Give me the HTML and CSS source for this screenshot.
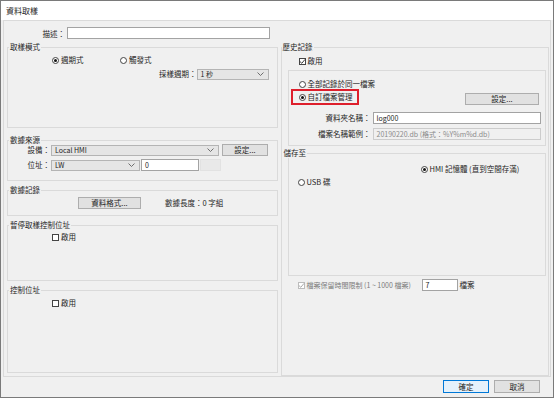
FILE: index.html
```html
<!DOCTYPE html>
<html lang="zh-Hant">
<head>
    <meta charset="UTF-8" />
    <title>資料取樣</title>
    <link rel="stylesheet" href="styles.css">
</head>
<body>
    <div class="window">
        <div class="titlebar">資料取樣</div>
        <div class="content">
            <div class="panel">
                <!-- description -->
                <div class="desc-row">
                    <span class="desc-label">描述：</span>
                    <span class="textbox desc-input"></span>
                </div>

                <div class="columns">
                    <div class="col-left">
                        <fieldset class="group g-mode">
                            <legend>取樣模式</legend>
                            <div class="row mode-radios">
                                <span class="opt opt-period"><span class="radio checked"></span>週期式</span>
                                <span class="opt"><span class="radio"></span>觸發式</span>
                            </div>
                            <div class="row period-row">
                                <span>採樣週期：</span>
                                <span class="combo period-combo">1 秒
                                    <svg width="7" height="4" viewBox="0 0 7 4"><path d="M0.5 0.5 L3.5 3.5 L6.5 0.5" fill="none" stroke="#606060" stroke-width="0.9"/></svg>
                                </span>
                            </div>
                        </fieldset>

                        <fieldset class="group g-source">
                            <legend>數據來源</legend>
                            <div class="row src-row">
                                <span class="field-label">設備：</span>
                                <span class="combo device-combo">Local HMI
                                    <svg width="7" height="4" viewBox="0 0 7 4"><path d="M0.5 0.5 L3.5 3.5 L6.5 0.5" fill="none" stroke="#606060" stroke-width="0.9"/></svg>
                                </span>
                                <span class="button device-btn">設定...</span>
                            </div>
                            <div class="row src-row second">
                                <span class="field-label">位址：</span>
                                <span class="combo addr-combo">LW
                                    <svg width="7" height="4" viewBox="0 0 7 4"><path d="M0.5 0.5 L3.5 3.5 L6.5 0.5" fill="none" stroke="#606060" stroke-width="0.9"/></svg>
                                </span>
                                <span class="textbox addr-input">0</span>
                                <span class="graybox"></span>
                            </div>
                        </fieldset>

                        <fieldset class="group g-record">
                            <legend>數據記錄</legend>
                            <div class="row record-row">
                                <span class="button format-btn">資料格式...</span>
                                <span class="record-len">數據長度：0 字組</span>
                            </div>
                        </fieldset>

                        <fieldset class="group g-pause">
                            <legend>暫停取樣控制位址</legend>
                            <div class="row check-row">
                                <span class="checkbox"></span>啟用
                            </div>
                        </fieldset>

                        <fieldset class="group g-control">
                            <legend>控制位址</legend>
                            <div class="row check-row">
                                <span class="checkbox"></span>啟用
                            </div>
                        </fieldset>
                    </div>

                    <fieldset class="group g-history">
                        <legend>歷史記錄</legend>
                        <div class="row history-enable">
                            <span class="checkbox">
                                <svg width="7" height="7" viewBox="0 0 7 7"><path d="M1 3.6 L2.8 5.3 L6 1.4" fill="none" stroke="#222" stroke-width="0.9"/></svg>
                            </span>啟用
                        </div>

                        <div class="subbox files-box">
                            <div class="row file-opt">
                                <span class="radio"></span>全部記錄於同一檔案
                            </div>
                            <div class="row custom-row">
                                <span class="highlight"><span class="radio checked"></span>自訂檔案管理</span>
                                <span class="button custom-btn">設定...</span>
                            </div>
                            <div class="row name-row">
                                <span class="name-label">資料夾名稱：</span>
                                <span class="textbox name-input">log000</span>
                            </div>
                            <div class="row name-row sample">
                                <span class="name-label">檔案名稱範例：</span>
                                <span class="textbox name-input disabled">20190220.db (格式：%Y%m%d.db)</span>
                            </div>
                        </div>

                        <fieldset class="group g-store">
                            <legend>儲存至</legend>
                            <div class="row store-hmi">
                                <span class="radio checked"></span>HMI 記憶體 (直到空間存滿)
                            </div>
                            <div class="row store-usb">
                                <span class="radio"></span>USB 碟
                            </div>
                        </fieldset>

                        <div class="row keep-row">
                            <span class="checkbox disabled">
                                <svg width="7" height="7" viewBox="0 0 7 7"><path d="M1 3.6 L2.8 5.3 L6 1.4" fill="none" stroke="#a0a0a0" stroke-width="0.9"/></svg>
                            </span>
                            <span class="keep-label">檔案保留時間限制 (1 ~ 1000 檔案)</span>
                            <span class="textbox keep-input">7</span>
                            <span class="keep-unit">檔案</span>
                        </div>
                    </fieldset>
                </div>
            </div>

            <div class="footer">
                <span class="button default-btn">確定</span>
                <span class="button">取消</span>
            </div>
        </div>
    </div>
</body>
</html>
```

FILE: styles.css
```css
* {
    box-sizing: border-box;
}
body {
    margin: 0;
    background: #ffffff;
    font-family: "Noto Sans CJK TC", "Noto Sans", sans-serif;
    font-size: 7.5px;
    color: #1e1e1e;
}
.window {
    width: 554px;
    height: 398px;
    border: 1px solid #7a7a7a;
    background: #f0f0f0;
    display: flex;
    flex-direction: column;
}
.titlebar {
    height: 19px;
    line-height: 19px;
    background: #ffffff;
    padding-left: 5px;
    font-size: 8px;
}
.content {
    flex: 1;
    padding: 0 2px;
    display: flex;
    flex-direction: column;
}
.panel {
    height: 357px;
    border: 1px solid #dadada;
    padding: 0 1px 0 3px;
}
.row {
    display: flex;
    align-items: center;
    height: 12px;
    line-height: 12px;
    white-space: nowrap;
}

/* controls */
.textbox {
    display: block;
    height: 12px;
    line-height: 10px;
    background: #ffffff;
    border: 1px solid #a3a3a3;
    padding-left: 3px;
    font-size: 7px;
}
.textbox.disabled {
    background: #f0f0f0;
    border-color: #cccccc;
    color: #8a8a8a;
}
.combo {
    display: flex;
    align-items: center;
    justify-content: space-between;
    height: 11px;
    line-height: 9px;
    background: #e5e5e5;
    border: 1px solid #b4b4b4;
    padding: 0 4px 0 3px;
    font-size: 7px;
}
.button {
    display: block;
    height: 12px;
    line-height: 10px;
    background: #e1e1e1;
    border: 1px solid #adadad;
    text-align: center;
}
.graybox {
    width: 21px;
    height: 12px;
    margin-left: 1px;
    background: #e9e9e9;
    border: 1px solid #e2e2e2;
}
.radio {
    width: 7px;
    height: 7px;
    border: 1px solid #444444;
    border-radius: 50%;
    background: #ffffff;
    margin-right: 2px;
    display: flex;
    align-items: center;
    justify-content: center;
    flex: none;
}
.radio.checked::after {
    content: "";
    width: 3px;
    height: 3px;
    border-radius: 50%;
    background: #111111;
}
.checkbox {
    width: 7px;
    height: 7px;
    border: 1px solid #444444;
    background: #ffffff;
    margin-right: 2px;
    display: flex;
    flex: none;
}
.checkbox svg {
    margin: -1px;
}
.checkbox.disabled {
    border-color: #bcbcbc;
}

/* layout */
.desc-row {
    display: flex;
    align-items: center;
    height: 12px;
    margin: 6px 0 3px;
}
.desc-label {
    width: 58px;
    text-align: right;
}
.desc-input {
    width: 203px;
    margin-left: 2px;
}
.columns {
    display: flex;
    gap: 3px;
}
.col-left {
    width: 271px;
    display: flex;
    flex-direction: column;
}
.group {
    margin: 0;
    padding: 0;
    min-width: 0;
    border: 1px solid #dadada;
}
.group legend {
    margin-left: 1px;
    padding: 0 1px;
    line-height: 10px;
    height: 10px;
}
.g-mode { height: 86px; margin-bottom: 7px; }
.g-source { height: 46px; margin-bottom: 4px; }
.g-record { height: 31px; margin-bottom: 4px; }
.g-pause { height: 61px; margin-bottom: 4px; }
.g-control { height: 88px; }

.mode-radios {
    margin-top: 2px;
    padding-left: 44px;
}
.opt {
    display: flex;
    align-items: center;
}
.opt-period {
    width: 68px;
}
.period-row {
    margin-top: 2px;
    justify-content: flex-end;
    padding-right: 8px;
}
.period-combo {
    width: 72px;
}

.src-row {
    margin-top: -1px;
}
.src-row .field-label {
    width: 42px;
    text-align: right;
}
.src-row.second {
    margin-top: 3px;
}
.device-combo {
    width: 168px;
    margin-left: 1px;
}
.device-btn {
    width: 46px;
    margin-left: 3px;
}
.addr-combo {
    width: 89px;
    margin-left: 1px;
}
.addr-input {
    width: 58px;
    margin-left: 1px;
}

.record-row {
    margin-top: 2px;
}
.format-btn {
    width: 63px;
    margin-left: 70px;
}
.record-len {
    margin-left: 24px;
}
.check-row {
    padding-left: 44px;
}
.g-pause .check-row {
    margin-top: 1px;
}
.g-control .check-row {
    margin-top: 2px;
}

/* history */
.g-history {
    width: 269px;
    height: 334px;
}
.g-history > legend {
    margin-left: 0;
}
.history-enable {
    margin-top: 3px;
    padding-left: 17px;
}
.subbox {
    border: 1px solid #dadada;
}
.files-box {
    height: 76px;
    margin: 3px 2px 0 6px;
}
.file-opt {
    height: 10px;
    margin-top: 8px;
    padding-left: 10px;
}
.custom-row {
    height: 16px;
    align-items: flex-end;
}
.highlight {
    display: flex;
    align-items: center;
    width: 68px;
    height: 16px;
    margin-left: 2px;
    padding-left: 6px;
    border: 2px solid #de1f2c;
}
.custom-btn {
    width: 74px;
    margin-left: auto;
    margin-right: 6px;
}
.name-row {
    margin-top: 7px;
}
.name-row.sample {
    margin-top: 4px;
}
.name-label {
    width: 82px;
    text-align: right;
}
.name-input {
    width: 168px;
    margin-left: 2px;
}
.g-store {
    height: 128px;
    margin: 2px 2px 0 6px;
}
.g-store > legend {
    margin-left: -6px;
}
.store-hmi {
    height: 10px;
    margin-top: 6px;
    padding-left: 132px;
}
.store-usb {
    height: 10px;
    margin-top: 3px;
    padding-left: 9px;
}
.keep-row {
    margin-top: 3px;
    padding-left: 16px;
}
.keep-label {
    width: 114px;
    color: #7a7a7a;
    font-size: 7px;
}
.keep-input {
    width: 36px;
    margin-left: 1px;
}
.keep-unit {
    margin-left: 2px;
}

/* footer */
.footer {
    display: flex;
    justify-content: flex-end;
    gap: 5px;
    margin-top: 3px;
    padding-right: 11px;
}
.footer .button {
    width: 46px;
    height: 13px;
    line-height: 11px;
}
.default-btn {
    background: #e5f1fb;
    border-color: #0078d7 !important;
}
```
